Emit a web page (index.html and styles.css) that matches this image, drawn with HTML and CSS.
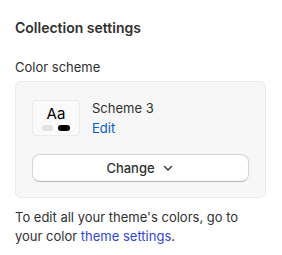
FILE: index.html
```html
<!DOCTYPE html>
<html>
<head>
    <title>Collection settings</title>
    <meta name="viewport" content="width=device-width, initial-scale=1">
    <link rel="stylesheet" href="styles.css">
</head>
<body>
    <div class="panel">
        <h2>Collection settings</h2>
        <div class="label">Color scheme</div>
        <div class="card">
            <div class="scheme">
                <div class="swatch">
                    <span class="sample">Aa</span>
                    <div class="pills">
                        <span class="pill light"></span>
                        <span class="pill dark"></span>
                    </div>
                </div>
                <div class="scheme-info">
                    <div class="scheme-name">Scheme 3</div>
                    <a href="#" class="edit">Edit</a>
                </div>
            </div>
            <button class="change">
                Change
                <svg width="14" height="14" viewBox="0 0 14 14"><path d="M3.5 5.5 7 9l3.5-3.5" fill="none" stroke="#303030" stroke-width="1.4" stroke-linecap="round" stroke-linejoin="round"/></svg>
            </button>
        </div>
        <p class="hint">To edit all your theme's colors, go to your color <a href="#">theme settings</a>.</p>
    </div>
</body>
</html>
```

FILE: styles.css
```css
body {
    font-family: Inter, "Noto Sans", sans-serif;
    background-color: #fff;
    color: #303030;
    margin: 0;
    padding: 0;
}
.panel {
    padding: 18px 16px 0 15px;
}
h2 {
    font-size: 14px;
    font-weight: 600;
    line-height: 20px;
    margin: 0 0 19px;
}
.label {
    font-size: 13px;
    line-height: 20px;
    margin-bottom: 4px;
}
.card {
    background-color: #f7f7f7;
    border: 1px solid #ebebeb;
    border-radius: 6px;
    padding: 16px 16px 15px;
}
.scheme {
    display: flex;
    gap: 12px;
    align-items: flex-start;
}
.swatch {
    width: 46px;
    height: 34px;
    margin-top: 2px;
    border: 1px solid #ebebeb;
    border-radius: 4px;
    background-color: #fafafa;
    display: flex;
    flex-direction: column;
    align-items: center;
}
.sample {
    font-size: 15px;
    line-height: 16px;
    margin-top: 5px;
    color: #000;
}
.pills {
    display: flex;
    gap: 5px;
    margin-top: 3px;
}
.pill {
    height: 6px;
    border-radius: 3px;
}
.pill.light {
    width: 11px;
    background-color: #e3e3e3;
}
.pill.dark {
    width: 12px;
    background-color: #000;
}
.scheme-info {
    font-size: 13px;
    line-height: 20px;
}
.edit {
    color: #005bd3;
    text-decoration: none;
}
.change {
    display: flex;
    align-items: center;
    justify-content: center;
    gap: 6px;
    width: 100%;
    height: 28px;
    margin-top: 16px;
    background-color: #fff;
    border: 1px solid #d4d4d4;
    border-bottom-color: #b5b5b5;
    border-radius: 8px;
    font-family: inherit;
    font-size: 13px;
    font-weight: 500;
    color: #303030;
}
.hint {
    font-size: 13px;
    line-height: 19px;
    margin: 10px 0 0;
}
.hint a {
    color: #3348d6;
    text-decoration: none;
}
```
